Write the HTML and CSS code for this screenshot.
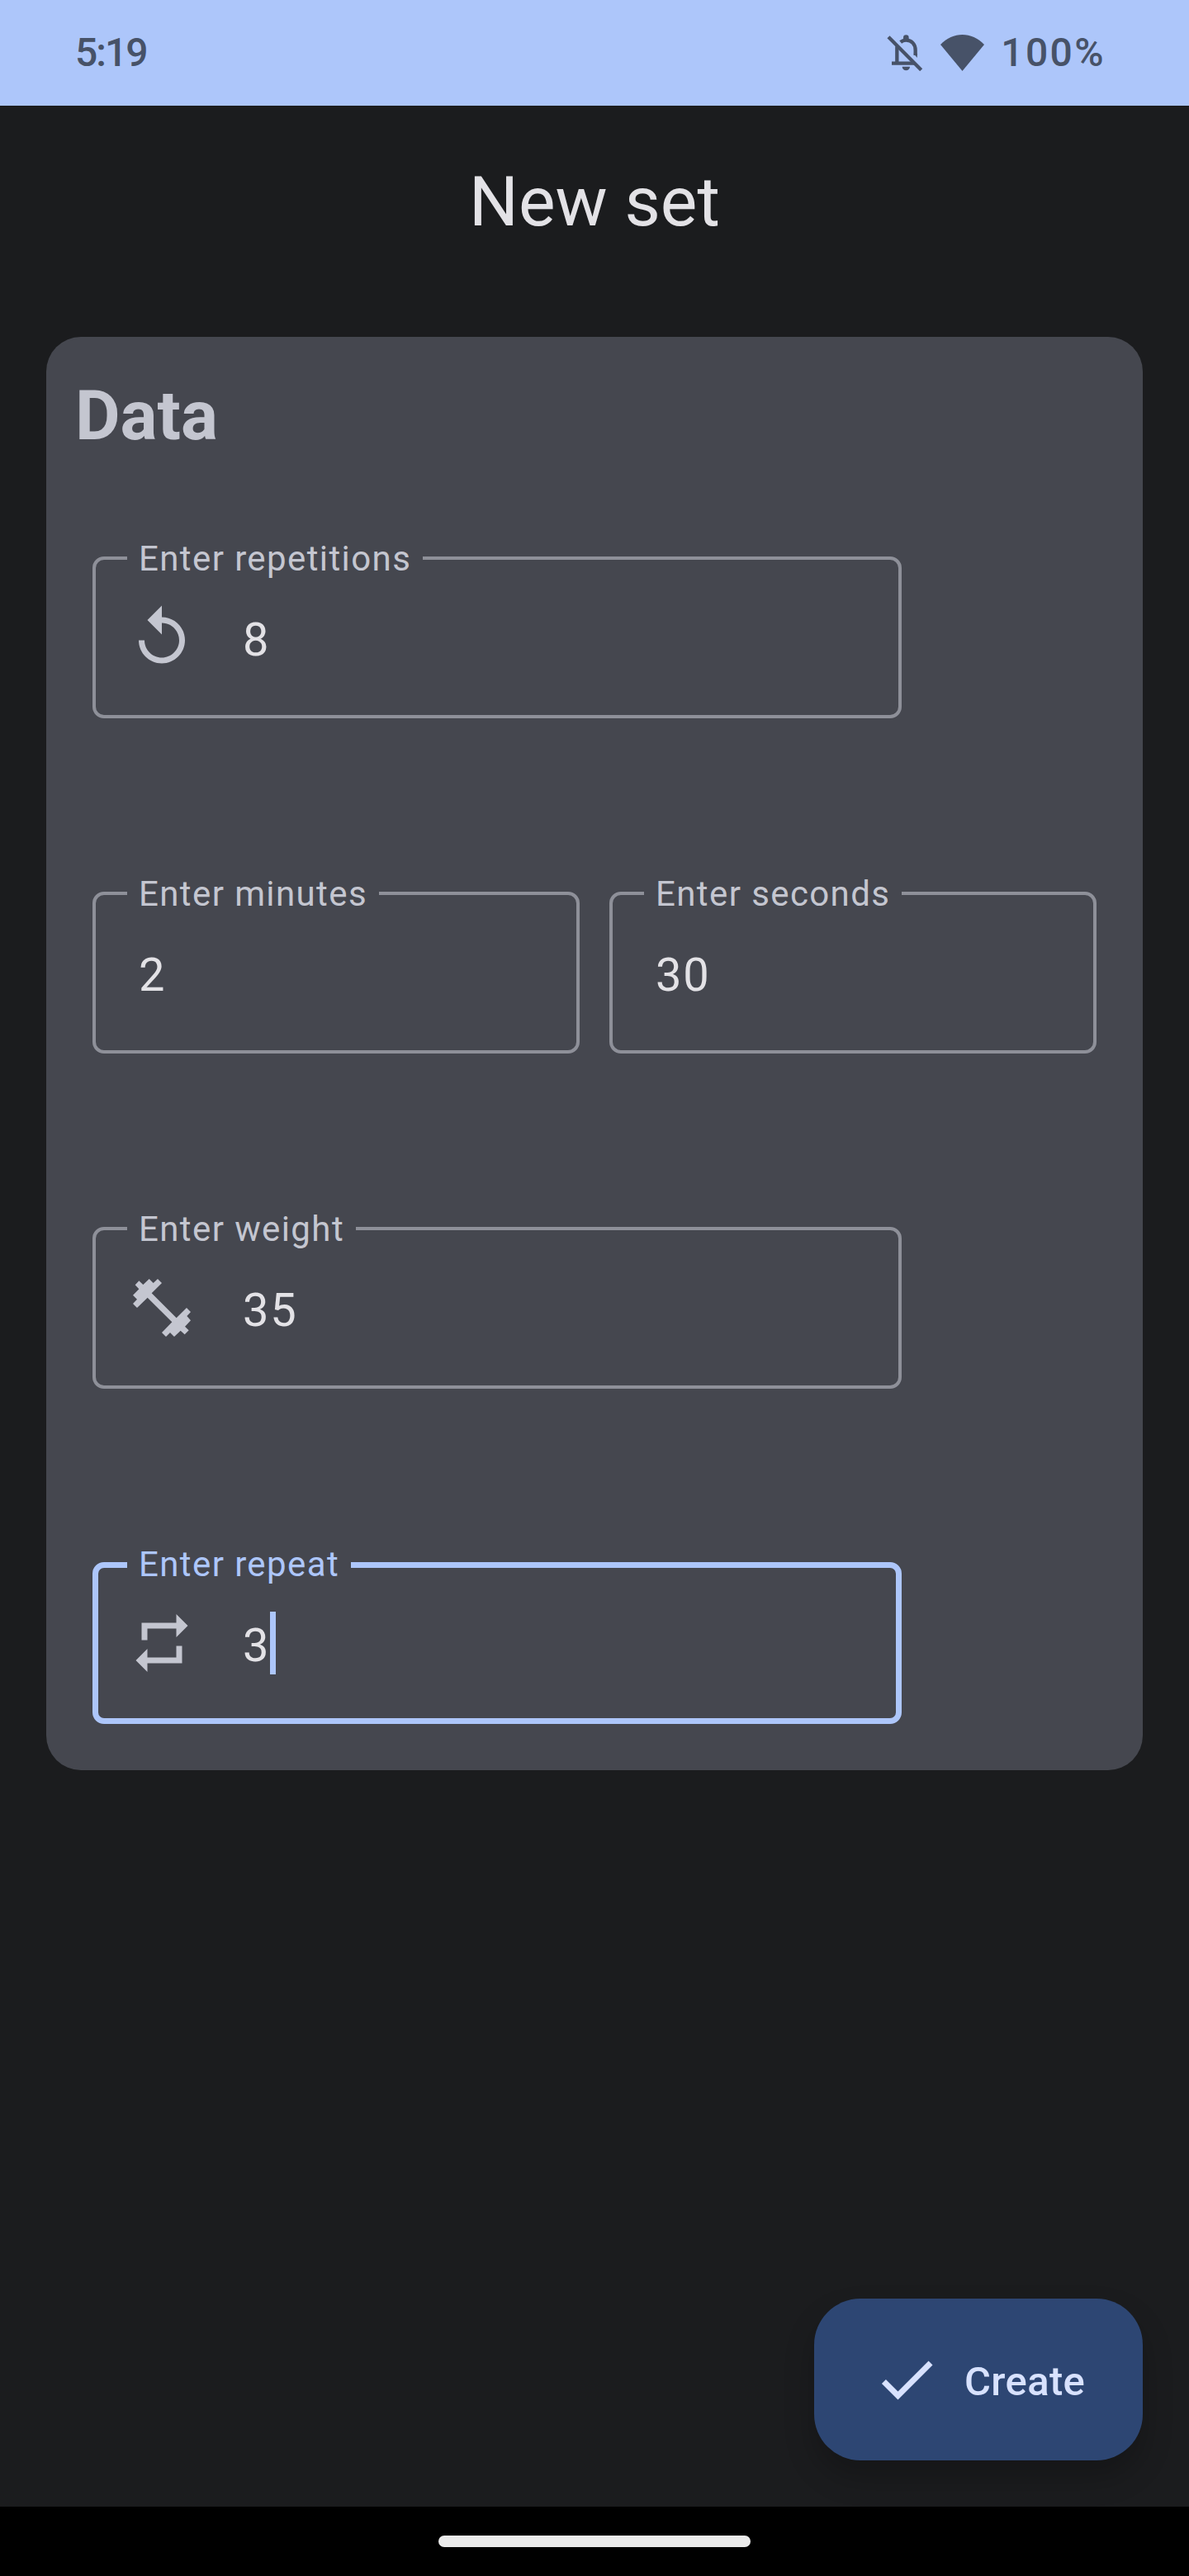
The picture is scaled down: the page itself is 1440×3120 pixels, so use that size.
FILE: index.html
```html
<!DOCTYPE html>
<html lang="en">
<head>
<meta charset="utf-8">
<title>New set</title>
<link rel="stylesheet" href="styles.css">
</head>
<body>
<div class="screen">
  <header class="status-bar">
    <span class="clock">5:19</span>
    <div class="indicators">
      <svg class="bell" viewBox="99 126 132 135" fill="none" stroke="currentColor" stroke-width="13">
        <path d="M105 134L224 254"/>
        <path d="M136 169V230M117 230H199"/>
        <path d="M149 153C155 148 162 146 169 146C190 146 203 162 203 182V201"/>
        <path d="M196 194H209.500V210Z" fill="currentColor" stroke="none"/>
        <path d="M159 148V137A10 10 0 0 1 179 137V148ZM155 242H183A14 14 0 0 1 155 242Z" fill="currentColor" stroke="none"/>
      </svg>
      <svg class="wifi" viewBox="0 0 53 44" fill="currentColor"><path d="M0 12C15-4 38-4 53 12L26.500 44Z"/></svg>
      <span class="battery">100%</span>
    </div>
  </header>

  <main class="content">
    <h1 class="title">New set</h1>

    <section class="card">
      <h2 class="card-title">Data</h2>
      <div class="fields">
        <div class="field field-wide">
          <span class="label">Enter repetitions</span>
          <svg class="icon" viewBox="0 0 24 24" fill="currentColor"><path d="M12 5V1L7 6l5 5V7c3.310 0 6 2.690 6 6s-2.690 6-6 6-6-2.690-6-6H4c0 4.420 3.580 8 8 8s8-3.580 8-8-3.580-8-8-8z"/></svg>
          <span class="value">8</span>
        </div>
        <div class="row">
          <div class="field">
            <span class="label">Enter minutes</span>
            <span class="value">2</span>
          </div>
          <div class="field">
            <span class="label">Enter seconds</span>
            <span class="value">30</span>
          </div>
        </div>
        <div class="field field-wide">
          <span class="label">Enter weight</span>
          <svg class="icon" viewBox="192 246 252 252" fill="currentColor"><path d="M235 274L250 288L272 267L287 282L303 267L318 282L281 319L371 409L408 372L423 387L409 402L423 418L402 440L416 454L401 469L386 455L363 477L348 462L333 477L318 462L355 424L266 335L228 372L213 357L228 341L213 326L235 304L221 289Z"/></svg>
          <span class="value">35</span>
        </div>
        <div class="field field-wide focused">
          <span class="label">Enter repeat</span>
          <svg class="icon" viewBox="0 0 24 24" fill="currentColor"><path d="M7 7h10v3l4-4-4-4v3H5v6h2V7zm10 10H7v-3l-4 4 4 4v-3h12v-6h-2v4z"/></svg>
          <span class="value">3</span><span class="caret"></span>
        </div>
      </div>
    </section>

    <button class="fab" type="button">
      <svg class="icon" viewBox="0 0 24 24" fill="currentColor"><path d="M9 16.170L4.830 12l-1.420 1.410L9 19 21 7l-1.410-1.410z"/></svg>
      <span class="fab-text">Create</span>
    </button>
  </main>

  <footer class="nav-bar"><div class="handle"></div></footer>
</div>
</body>
</html>
```
FILE: styles.css
```css
* { box-sizing: border-box; }

body {
  margin: 0;
  background: #1b1c1e;
  font-family: Roboto, "Liberation Sans", sans-serif;
}

svg { display: block; flex: none; }

.screen {
  display: flex;
  flex-direction: column;
  width: 1440px;
  height: 3120px;
  background: #1b1c1e;
}

.status-bar {
  display: flex;
  align-items: center;
  justify-content: space-between;
  height: 128px;
  padding: 0 101px 0 91px;
  background: #adc6fa;
  color: #475268;
  font-size: 48px;
  font-weight: 500;
  line-height: 56px;
}

.clock { letter-spacing: -2px; }
.indicators { display: flex; align-items: center; }
.bell { width: 44px; height: 45px; margin-right: 21px; }
.wifi { width: 53px; height: 44px; margin-right: 20px; }
.battery { letter-spacing: 2.4px; }

.content {
  display: flex;
  flex-direction: column;
  flex: 1;
  padding: 0 56px 56px;
}

.title {
  margin: 57px 0 0;
  color: #e3e2e6;
  font-size: 84px;
  font-weight: 400;
  line-height: 120px;
  text-align: center;
}

.card {
  margin-top: 103px;
  padding: 36px 56px 56px;
  border-radius: 42px;
  background: #45474f;
  color: #c4c6d0;
}

.card-title {
  margin: 0 0 0 -21px;
  font-size: 84px;
  font-weight: 700;
  line-height: 120px;
}

.fields {
  display: flex;
  flex-direction: column;
  gap: 210px;
  margin-top: 110px;
}

.row {
  display: grid;
  grid-template-columns: 1fr 1fr;
  gap: 36px;
}

.field {
  --stroke: 4px;
  position: relative;
  display: flex;
  align-items: center;
  height: 196px;
  padding-left: calc(56px - var(--stroke));
  border: var(--stroke) solid #8e9099;
  border-radius: 14px;
}

.field-wide {
  width: 980px;
  padding-left: calc(42px - var(--stroke));
}

.field-wide .icon { margin-right: 56px; }

.focused {
  --stroke: 7px;
  border-color: #adc6fa;
}

.label {
  position: absolute;
  top: calc(-21px - var(--stroke));
  left: calc(42px - var(--stroke));
  padding: 0 14px;
  background: #45474f;
  font-size: 42px;
  letter-spacing: 1.4px;
  line-height: 48px;
  white-space: nowrap;
}

.focused .label { color: #adc6fa; }

.value {
  padding-top: 6px;
  color: #e3e2e6;
  font-size: 56px;
  letter-spacing: 1.75px;
  line-height: 84px;
}

.caret {
  width: 7px;
  height: 76px;
  background: #adc6fa;
}

.icon { width: 84px; height: 84px; }

.fab {
  display: flex;
  align-items: center;
  align-self: flex-end;
  gap: 28px;
  width: 398px;
  height: 196px;
  margin-top: auto;
  padding: 0 0 0 70px;
  border: 0;
  border-radius: 56px;
  background: #2d4673;
  box-shadow: 0 20px 36px rgba(0, 0, 0, 0.22);
  color: #d8e2ff;
  font-family: inherit;
}

.fab-text {
  padding-top: 5px;
  font-size: 49px;
  font-weight: 500;
  letter-spacing: 0.35px;
  line-height: 70px;
}

.nav-bar {
  position: relative;
  display: flex;
  align-items: center;
  justify-content: center;
  height: 84px;
  background: #000;
}

.handle {
  width: 378px;
  height: 14px;
  border-radius: 7px;
  background: #ebebeb;
}
```
